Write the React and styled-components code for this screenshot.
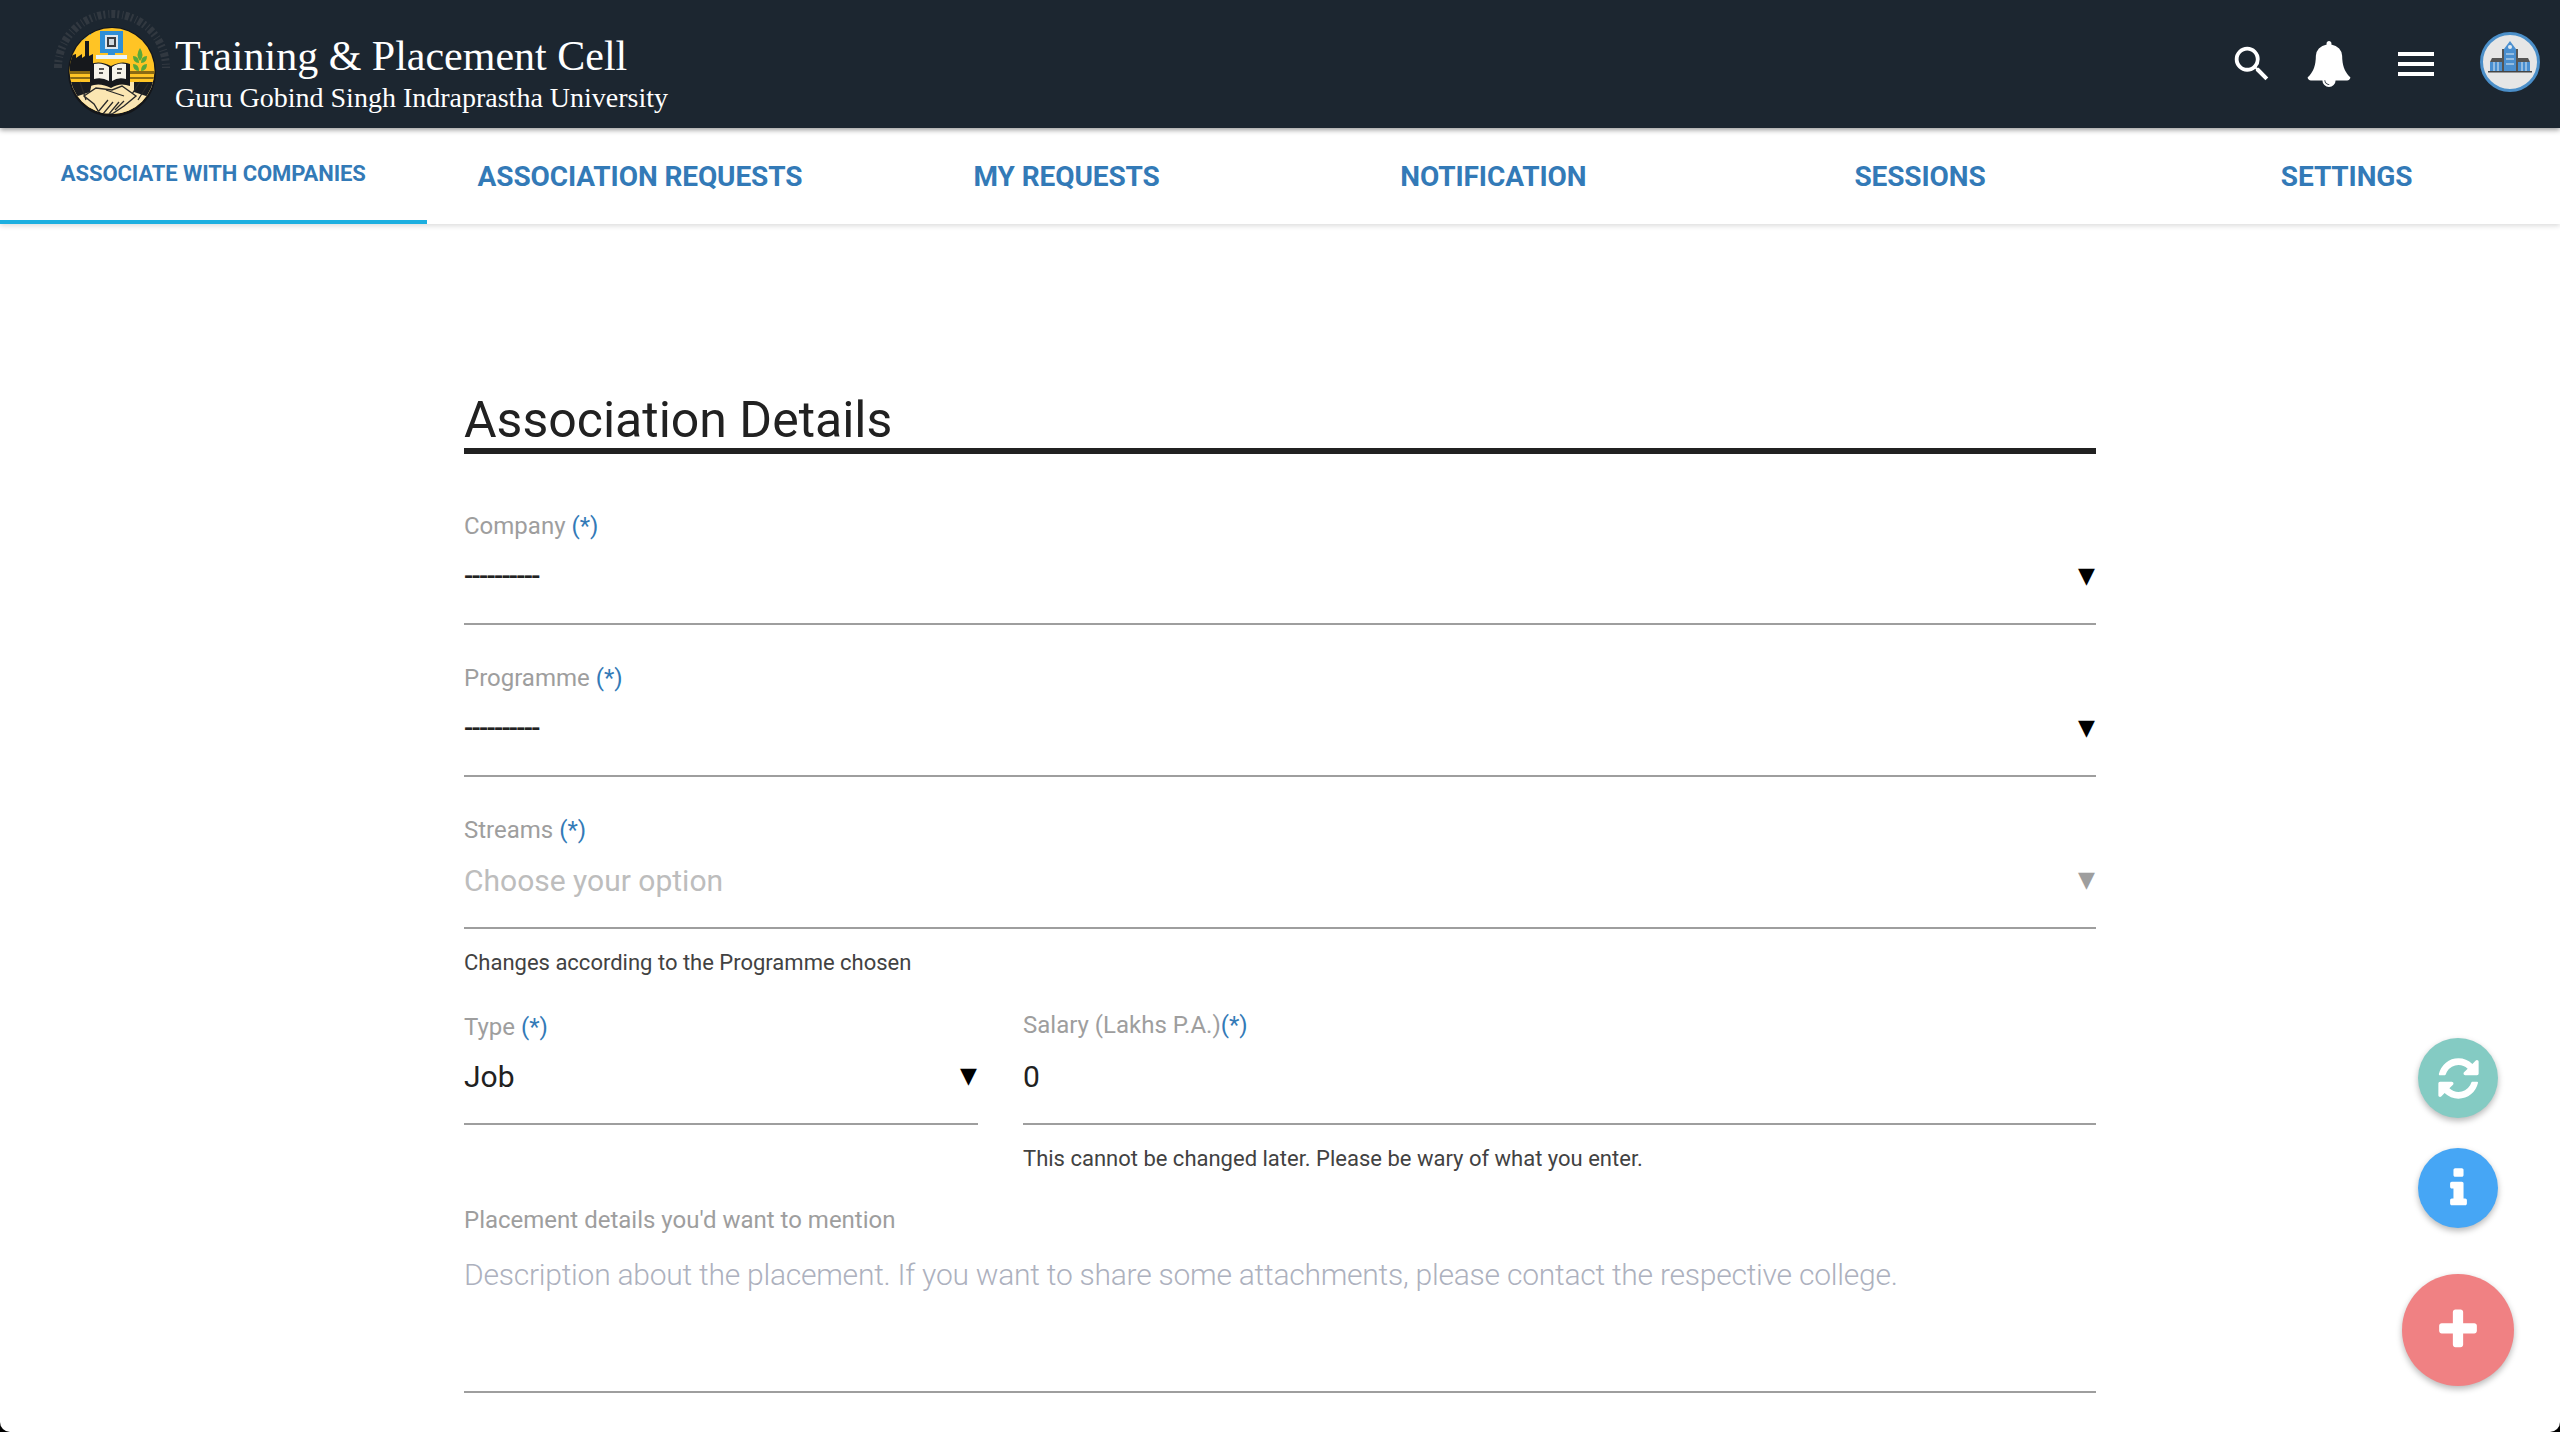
import React from 'react';
import styled, { createGlobalStyle } from 'styled-components';
import { MdSearch } from 'react-icons/md';

const Global = createGlobalStyle`
  html, body { margin: 0; padding: 0; background: #000; height: 1432px; overflow: hidden; }
  * { box-sizing: border-box; }
  body { font-family: Roboto, "Liberation Sans", sans-serif; }
`;
const Page = styled.div`
  height: 1432px; background: #fff; border-radius: 0 0 10px 10px; overflow: hidden; position: relative;
`;
const Header = styled.header`
  height: 128px; background: #1c2630; display: flex; align-items: center; padding: 0 20px 0 56px;
  box-shadow: 0 2px 5px rgba(0,0,0,.4); position: relative; z-index: 2;
`;
const Brand = styled.div`display: flex; align-items: center; gap: 7px; flex: 1;`;
const BrandText = styled.div`color: #fff; font-family: "Liberation Serif", serif; display: flex; flex-direction: column; margin-top: 18px;`;
const BrandTitle = styled.div`font-size: 42px; line-height: 50px;`;
const BrandSub = styled.div`font-size: 28px; line-height: 34px;`;
const Actions = styled.div`display: flex; align-items: center; color: #fff;`;
const IconSlot = styled.div`
  display: flex; align-items: center; justify-content: center; width: ${p => p.$w}px; margin-left: ${p => p.$gap ?? 0}px; margin-top: ${p => p.$top ?? 0}px;
`;
const MenuBars = styled.div`
  width: 36px; height: 24px; display: flex; flex-direction: column; justify-content: space-between;
  i { display: block; height: 4px; background: #fff; }
`;
const Tabs = styled.nav`
  height: 96px; display: grid; grid-template-columns: repeat(6, 1fr); background: #fff;
  box-shadow: 0 2px 5px rgba(0,0,0,.14); position: relative; z-index: 1;
`;
const Tab = styled.div`
  display: flex; align-items: center; justify-content: center; color: #337ab7; font-weight: 700;
  font-size: ${p => (p.$active ? '22px' : '28px')}; text-transform: uppercase; letter-spacing: ${p => (p.$active ? '-.08px' : '-.1px')};
  padding-top: ${p => (p.$active ? '1px' : '4px')};
  padding-bottom: ${p => (p.$active ? '2px' : '0')};
  border-bottom: 4px solid ${p => (p.$active ? '#1cafe0' : 'transparent')};
`;
const Main = styled.main`width: 1632px; margin: 0 auto; padding-top: 160px;`;
const Title = styled.h1`
  margin: 0; font-size: 50px; font-weight: 400; line-height: 73px; color: #212121;
  border-bottom: 6px solid #212121; height: 70px; letter-spacing: 0;
`;
const Field = styled.div`margin-top: ${p => p.$mt ?? 38}px;`;
const Label = styled.label`
  display: block; height: 30px; line-height: 30px; font-size: 24px; color: #9e9e9e;
  margin-top: ${p => p.$up ?? 0}px; margin-bottom: ${p => -(p.$up ?? 0)}px;
`;
const Req = styled.span`color: #337ab7;`;
const Control = styled.div`
  height: ${p => p.$h ?? 84}px; border-bottom: 2.5px solid #9e9e9e; display: flex; align-items: center; justify-content: space-between;
  padding-bottom: 12px; font-size: 30px; color: ${p => (p.$muted ? '#bdbdbd' : '#212121')};
`;
const Dashes = styled.span`font-size: 27px; font-weight: 500; letter-spacing: -1.7px; color: #222;`;
const Arrow = styled.span`
  font-family: "DejaVu Sans", sans-serif; font-size: 22px; margin: -2px 1px 0 0; color: ${p => (p.$muted ? '#9e9e9e' : '#000')};
`;
const Help = styled.div`
  font-size: 22px; color: #424242; line-height: 30px; margin-top: ${p => p.$mt ?? 19}px;
`;
const Row = styled.div`display: grid; grid-template-columns: 514px 1fr; column-gap: 45px; margin-top: 34px;`;
const PlaceholderBox = styled.div`
  height: 158px; border-bottom: 2.5px solid #9e9e9e; padding-top: 22px; font-size: 30px; font-weight: 300; color: #adb1be; line-height: 36px; letter-spacing: -.24px;
`;
const Fabs = styled.div`position: absolute; z-index: 3; right: 46px; bottom: 46px; display: flex; flex-direction: column; align-items: center;`;
const Fab = styled.div`
  width: ${p => p.$size}px; height: ${p => p.$size}px; border-radius: 50%; background: ${p => p.$bg}; color: #fff;
  display: flex; align-items: center; justify-content: center; margin-top: ${p => p.$mt}px;
  box-shadow: 0 3px 6px rgba(0,0,0,.28);
`;

const GLYPHS = {
  refresh: 'M1639 1056q0 5-1 7-64 268-268 434.5t-478 166.5q-146 0-282.5-55t-243.5-157l-129 129q-19 19-45 19t-45-19-19-45v-448q0-26 19-45t45-19h448q26 0 45 19t19 45-19 45l-137 137q71 66 161 102t187 36q134 0 250-65t186-179q11-17 53-117 8-23 30-23h192q13 0 22.5 9.5t9.5 22.5zm25-800v448q0 26-19 45t-45 19h-448q-26 0-45-19t-19-45 19-45l138-138q-148-137-349-137-134 0-250 65t-186 179q-11 17-53 117-8 23-30 23h-199q-13 0-22.5-9.5t-9.5-22.5v-7q65-268 270-434.5t480-166.5q146 0 284 55.5t245 156.5l130-129q19-19 45-19t45 19 19 45z',
  info: 'M1216 1344v128q0 26-19 45t-45 19h-512q-26 0-45-19t-19-45v-128q0-26 19-45t45-19h64v-384h-64q-26 0-45-19t-19-45v-128q0-26 19-45t45-19h384q26 0 45 19t19 45v576h64q26 0 45 19t19 45zm-128-1152v192q0 26-19 45t-45 19h-256q-26 0-45-19t-19-45v-192q0-26 19-45t45-19h256q26 0 45 19t19 45z',
  plus: 'M1600 736v192q0 40-28 68t-68 28h-416v416q0 40-28 68t-68 28h-192q-40 0-68-28t-28-68v-416h-416q-40 0-68-28t-28-68v-192q0-40 28-68t68-28h416v-416q0-40 28-68t68-28h192q40 0 68 28t28 68v416h416q40 0 68 28t28 68z',
  bell: 'M912 1696q0-16-16-16-59 0-101.5-42.5t-42.5-101.5q0-16-16-16t-16 16q0 73 51.5 124.5t124.5 51.5q16 0 16-16zm816-288q0 52-38 90t-90 38h-448q0 106-75 181t-181 75-181-75-75-181h-448q-52 0-90-38t-38-90q50-42 91-88t85-119.5 74.5-158.5 50-206 19.5-260q0-152 117-282.5t307-158.5q-8-19-8-39 0-40 28-68t68-28 68 28 28 68q0 20-8 39 190 28 307 158.5t117 282.5q0 139 19.5 260t50 206 74.5 158.5 85 119.5 91 88z',
};
const Glyph = ({ name, size }) => (
  <svg width={size} height={size} viewBox="0 0 1792 1792" fill="currentColor"><path d={GLYPHS[name]} /></svg>
);

const LogoSvg = styled.svg`overflow: visible; flex: none;`;
const Logo = () => (
  <LogoSvg width="112" height="112" viewBox="0 0 112 112">
    <path d="M2 60 A54 54 0 0 1 110 60" fill="none" stroke="#3b4047" strokeWidth="8" strokeDasharray="4 2 2 3 1 2" opacity=".7" />
    <ellipse cx="56" cy="64" rx="44" ry="45" fill="#14161a" />
    <ellipse cx="56" cy="63" rx="42.5" ry="43" fill="#ffc425" />
    <clipPath id="lc"><ellipse cx="56" cy="63" rx="42.5" ry="43" /></clipPath>
    <g clipPath="url(#lc)">
      <path d="M14 62 V48 L20 46 V50 L26 46 V50 L29 48 V33 H33 V48 L37 46 V66 L14 66 Z" fill="#16181c" />
      <path d="M28 31 q2 -6 7 -5" stroke="#3aa0dc" strokeWidth="2" fill="none" />
      <path d="M10 63 H102 V66 H10Z M10 69 H102 V71 H10Z" fill="#8a6a14" />
      <path d="M10 74 H102 V110 H10Z" fill="#fbe6b2" />
      <path d="M10 74 H36 L34 84 L16 90 Z M102 74 H78 L78 84 L96 90 Z" fill="#1a1d22" />
      <path d="M14 76 L20 98 M24 74 L30 92 M92 76 L82 92 M84 74 L76 86" stroke="#2a2a2a" strokeWidth="1.3" fill="none" />
      <path d="M28 88 L40 80 L56 82 L66 78 L80 88 L68 98 L56 106 L44 106 L38 96 Z" fill="#fbe6b2" stroke="#2a2a2a" strokeWidth="1.4" />
      <path d="M42 104 L52 92 M47 106 L57 94 M53 106 L63 94 M59 102 L68 93 M50 82 L68 88" stroke="#2a2a2a" strokeWidth="1.3" fill="none" />
      <path d="M34 56 Q44 52 55 58 Q66 52 74 56 V78 Q64 74 55 80 Q44 74 34 78 Z" fill="#17191d" />
      <path d="M38 56 Q46 54 53 59 V73 Q46 69 38 71 Z M70 56 Q62 54 56 59 V73 Q62 69 70 71 Z" fill="#f6f3ea" />
      <path d="M43 61 h5 M43 65 h4 M61 61 h5 M61 65 h4" stroke="#222" strokeWidth="1.4" />
    </g>
    <rect x="44" y="23" width="23" height="22" fill="#2f8fd6" />
    <rect x="49" y="27" width="13" height="14" fill="#dfe8ee" />
    <rect x="51" y="29" width="9" height="10" fill="#3a3d40" />
    <rect x="53" y="31" width="5" height="6" fill="#cfd8dd" />
    <rect x="52" y="45" width="7" height="3" fill="#2f8fd6" />
    <rect x="40" y="47" width="31" height="4" fill="#eaf5fb" />
    <path d="M84 40 q5 7 0 13 q-5 -6 0 -13z M77 48 q6 0 6 7 q-6 0 -6 -7z M91 48 q-6 0 -6 7 q6 0 6 -7z M77 56 q6 0 6 7 q-6 0 -6 -7z M91 56 q-6 0 -6 7 q6 0 6 -7z" fill="#58a83a" />
  </LogoSvg>
);

const Avatar = () => (
  <svg width="60" height="60" viewBox="0 0 60 60">
    <circle cx="30" cy="30" r="28.5" fill="#e6e6e6" stroke="#4b8fc9" strokeWidth="3" />
    <path d="M8 39 h44 v1.5 h-44z" fill="#444" />
    <path d="M24 39 V17 L30 9 L36 17 V39 Z" fill="#4a8fd0" />
    <path d="M22 17 h2 V39 h-2z M36 17 h2 V39 h-2z" fill="#555" />
    <circle cx="30" cy="15" r="2" fill="#dfe9f1" />
    <path d="M10 30 L12 26 H22 V30 Z M38 26 H48 L50 30 H38 Z" fill="#555" />
    <path d="M10 30 H22 V39 H10 Z M38 30 H50 V39 H38 Z" fill="#4a8fd0" />
    <path d="M14 30 v9 M18 30 v9 M42 30 v9 M46 30 v9 M26 22 h8 M26 27 h8 M26 32 h8" stroke="#dfe9f1" strokeWidth="1" />
  </svg>
);

const Req2 = () => <Req>(*)</Req>;

export default function App() {
  return (
    <Page>
      <Global />
      <Header>
        <Brand>
          <Logo />
          <BrandText>
            <BrandTitle>Training &amp; Placement Cell</BrandTitle>
            <BrandSub>Guru Gobind Singh Indraprastha University</BrandSub>
          </BrandText>
        </Brand>
        <Actions>
          <IconSlot $w={46}><MdSearch size={46} /></IconSlot>
          <IconSlot $w={50} $gap={29}><Glyph name="bell" size={46} /></IconSlot>
          <IconSlot $w={36} $gap={44}><MenuBars><i /><i /><i /></MenuBars></IconSlot>
          <IconSlot $w={60} $gap={46} $top={-4}><Avatar /></IconSlot>
        </Actions>
      </Header>
      <Tabs>
        <Tab $active>Associate with companies</Tab>
        <Tab>Association Requests</Tab>
        <Tab>My Requests</Tab>
        <Tab>Notification</Tab>
        <Tab>Sessions</Tab>
        <Tab>Settings</Tab>
      </Tabs>
      <Main>
        <Title>Association Details</Title>
        <Field $mt={57}>
          <Label>Company <Req2 /></Label>
          <Control><Dashes>----------</Dashes><Arrow>▼</Arrow></Control>
        </Field>
        <Field>
          <Label>Programme <Req2 /></Label>
          <Control><Dashes>----------</Dashes><Arrow>▼</Arrow></Control>
        </Field>
        <Field>
          <Label>Streams <Req2 /></Label>
          <Control $muted><span>Choose your option</span><Arrow $muted>▼</Arrow></Control>
        </Field>
        <Help>Changes according to the Programme chosen</Help>
        <Row>
          <Field $mt={0}>
            <Label>Type <Req2 /></Label>
            <Control $h={83}><span>Job</span><Arrow>▼</Arrow></Control>
          </Field>
          <Field $mt={0}>
            <Label $up={-2}>Salary (Lakhs P.A.)<Req2 /></Label>
            <Control $h={83}><span>0</span></Control>
            <Help>This cannot be changed later. Please be wary of what you enter.</Help>
          </Field>
        </Row>
        <Field $mt={31}>
          <Label>Placement details you'd want to mention</Label>
          <PlaceholderBox>Description about the placement. If you want to share some attachments, please contact the respective college.</PlaceholderBox>
        </Field>
      </Main>
      <Fabs>
        <Fab $size={80} $bg="#84cbc3" $mt={0}><Glyph name="refresh" size={47} /></Fab>
        <Fab $size={80} $bg="#46a6f5" $mt={30}><Glyph name="info" size={47} /></Fab>
        <Fab $size={112} $bg="#f08183" $mt={46}><Glyph name="plus" size={48} /></Fab>
      </Fabs>
    </Page>
  );
}
